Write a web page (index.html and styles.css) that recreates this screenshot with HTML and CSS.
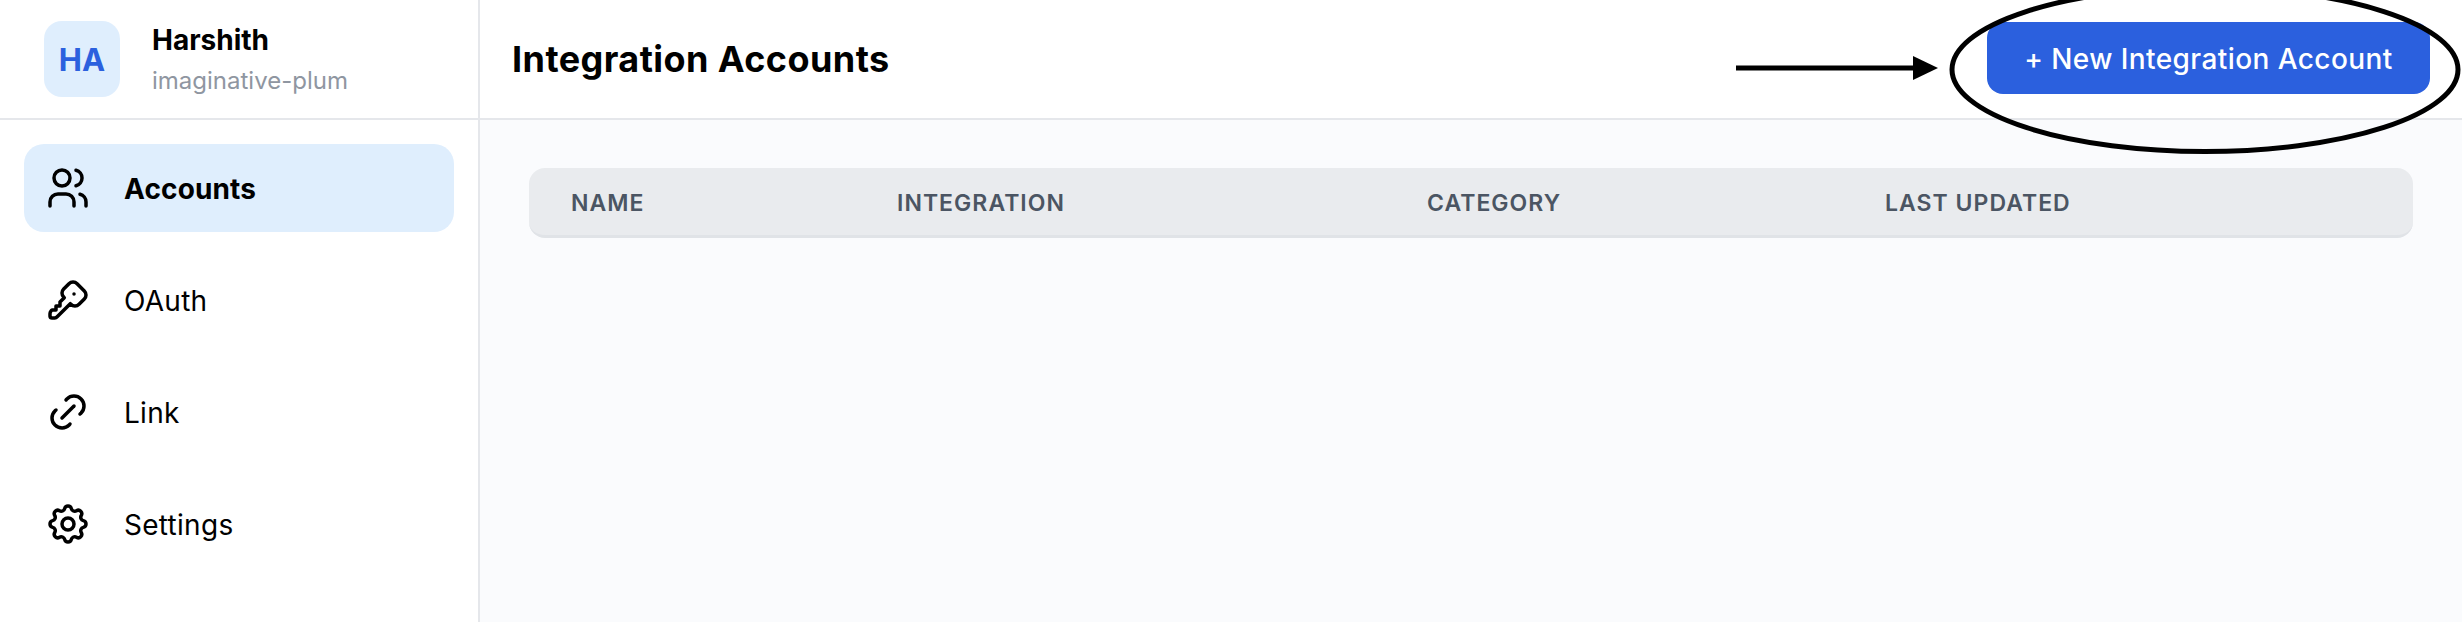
FILE: index.html
```html
<!DOCTYPE html>
<html lang="en">
<head>
    <meta charset="UTF-8">
    <title>Integration Accounts</title>
    <link rel="stylesheet" href="styles.css">
</head>
<body>
    <div class="app">
        <aside class="sidebar">
            <div class="workspace">
                <div class="avatar">HA</div>
                <div class="workspace-info">
                    <div class="workspace-user">Harshith</div>
                    <div class="workspace-name">imaginative-plum</div>
                </div>
            </div>
            <nav class="nav">
                <a class="nav-item active">
                    <svg class="nav-icon" viewBox="0 0 24 24"><path d="M9 7m-4 0a4 4 0 1 0 8 0a4 4 0 1 0 -8 0"/><path d="M3 21v-2a4 4 0 0 1 4 -4h4a4 4 0 0 1 4 4v2"/><path d="M16 3.13a4 4 0 0 1 0 7.75"/><path d="M21 21v-2a4 4 0 0 0 -3 -3.85"/></svg>
                    <span class="nav-label">Accounts</span>
                </a>
                <a class="nav-item">
                    <svg class="nav-icon" viewBox="0 0 24 24"><path d="M16.555 3.843l3.602 3.602a2.877 2.877 0 0 1 0 4.069l-2.643 2.643a2.877 2.877 0 0 1 -4.069 0l-.301 -.301l-6.558 6.558a2 2 0 0 1 -1.239 .578l-.175 .008h-1.172a1 1 0 0 1 -.993 -.883l-.007 -.117v-1.172a2 2 0 0 1 .467 -1.284l.119 -.14l.414 -.414h2v-2h2v-2l2.144 -2.144l-.301 -.301a2.877 2.877 0 0 1 0 -4.069l2.643 -2.643a2.877 2.877 0 0 1 4.069 0z"/><path d="M15 9h.01"/></svg>
                    <span class="nav-label">OAuth</span>
                </a>
                <a class="nav-item">
                    <svg class="nav-icon" viewBox="0 0 24 24"><path d="M9 15l6 -6"/><path d="M11 6l.463 -.536a5 5 0 0 1 7.071 7.072l-.534 .464"/><path d="M13 18l-.397 .534a5.068 5.068 0 0 1 -7.127 0a4.972 4.972 0 0 1 0 -7.071l.524 -.463"/></svg>
                    <span class="nav-label">Link</span>
                </a>
                <a class="nav-item">
                    <svg class="nav-icon" viewBox="0 0 24 24"><path d="M10.325 4.317c.426 -1.756 2.924 -1.756 3.35 0a1.724 1.724 0 0 0 2.573 1.066c1.543 -.94 3.31 .826 2.37 2.37a1.724 1.724 0 0 0 1.065 2.572c1.756 .426 1.756 2.924 0 3.35a1.724 1.724 0 0 0 -1.066 2.573c.94 1.543 -.826 3.31 -2.37 2.37a1.724 1.724 0 0 0 -2.572 1.065c-.426 1.756 -2.924 1.756 -3.35 0a1.724 1.724 0 0 0 -2.573 -1.066c-1.543 .94 -3.31 -.826 -2.37 -2.37a1.724 1.724 0 0 0 -1.065 -2.572c-1.756 -.426 -1.756 -2.924 0 -3.35a1.724 1.724 0 0 0 1.066 -2.573c-.94 -1.543 .826 -3.31 2.37 -2.37c1 .608 2.296 .07 2.572 -1.065z"/><path d="M9 12a3 3 0 1 0 6 0a3 3 0 0 0 -6 0"/></svg>
                    <span class="nav-label">Settings</span>
                </a>
            </nav>
        </aside>

        <main class="main">
            <header class="page-header">
                <h1>Integration Accounts</h1>
                <button class="primary-btn">+ New Integration Account</button>
            </header>
            <div class="page-body">
                <div class="table-head">
                    <div>Name</div>
                    <div>Integration</div>
                    <div>Category</div>
                    <div>Last Updated</div>
                </div>
            </div>
        </main>
    </div>

    <!-- hand drawn annotation on top of the screenshot -->
    <svg class="annotation" width="2462" height="622" viewBox="0 0 2462 622">
        <rect x="1736" y="65.5" width="180" height="5" fill="#000"/>
        <path d="M1913 56L1938 68L1913 80z" fill="#000"/>
        <ellipse cx="2205" cy="69.5" rx="253" ry="82" fill="none" stroke="#000" stroke-width="5"/>
    </svg>
</body>
</html>
```

FILE: styles.css
```css
* {
    box-sizing: border-box;
    margin: 0;
    padding: 0;
}

html, body {
    height: 100%;
    overflow: hidden;
}

body {
    position: relative;
    background: #fff;
    color: #000;
    font-family: Inter, 'Liberation Sans', sans-serif;
}

.app {
    display: grid;
    grid-template-columns: 480px 1fr;
    height: 622px;
}

.sidebar {
    border-right: 2px solid #e5e7eb;
}

.workspace {
    display: flex;
    align-items: center;
    gap: 32px;
    height: 120px;
    padding: 0 44px;
    border-bottom: 2px solid #e5e7eb;
}

.avatar {
    display: flex;
    align-items: center;
    justify-content: center;
    width: 76px;
    height: 76px;
    border-radius: 18px;
    background: #dfeefd;
    color: #2b60de;
    font-size: 31px;
    font-weight: 700;
}

.workspace-user {
    font-size: 28px;
    font-weight: 700;
    line-height: 38px;
}

.workspace-name {
    margin-top: 5px;
    color: #8f96a1;
    font-size: 24px;
    line-height: 34px;
}

.nav {
    display: flex;
    flex-direction: column;
    gap: 24px;
    padding: 24px 24px 0;
}

.nav-item {
    display: flex;
    align-items: center;
    gap: 32px;
    height: 88px;
    padding: 0 20px;
    border-radius: 20px;
    font-size: 28px;
    letter-spacing: 0.01em;
}

.nav-label {
    padding-top: 2px;
}

.nav-item.active {
    background: #dfeefd;
    font-weight: 700;
    letter-spacing: 0.005em;
}

.nav-icon {
    flex: none;
    width: 48px;
    height: 48px;
    fill: none;
    stroke: #000;
    stroke-width: 1.75;
    stroke-linecap: round;
    stroke-linejoin: round;
}

.main {
    display: flex;
    flex-direction: column;
    min-width: 0;
}

.page-header {
    display: flex;
    align-items: center;
    justify-content: space-between;
    height: 120px;
    padding: 0 32px;
    border-bottom: 2px solid #e5e7eb;
}

h1 {
    font-size: 36px;
    font-weight: 700;
    letter-spacing: 0.012em;
}

.primary-btn {
    width: 443px;
    height: 72px;
    margin-bottom: 2px;
    padding-top: 2px;
    border: none;
    border-radius: 16px;
    background: #2b60de;
    color: #fff;
    font-family: inherit;
    font-size: 28px;
    font-weight: 500;
    letter-spacing: 0.015em;
}

.page-body {
    flex: 1;
    padding: 48px 49px;
    background: #fafbfd;
}

.table-head {
    display: grid;
    grid-template-columns: 326px 530px 458px 1fr;
    align-items: center;
    height: 70px;
    padding-top: 2px;
    border-bottom: 3px solid #e0e3e7;
    border-radius: 16px;
    background: #e9ebee;
    color: #4b5563;
    font-size: 23px;
    font-weight: 600;
    letter-spacing: 0.045em;
    text-transform: uppercase;
}

.table-head div {
    padding-left: 42px;
}

.annotation {
    position: absolute;
    top: 0;
    left: 0;
    pointer-events: none;
}
```
